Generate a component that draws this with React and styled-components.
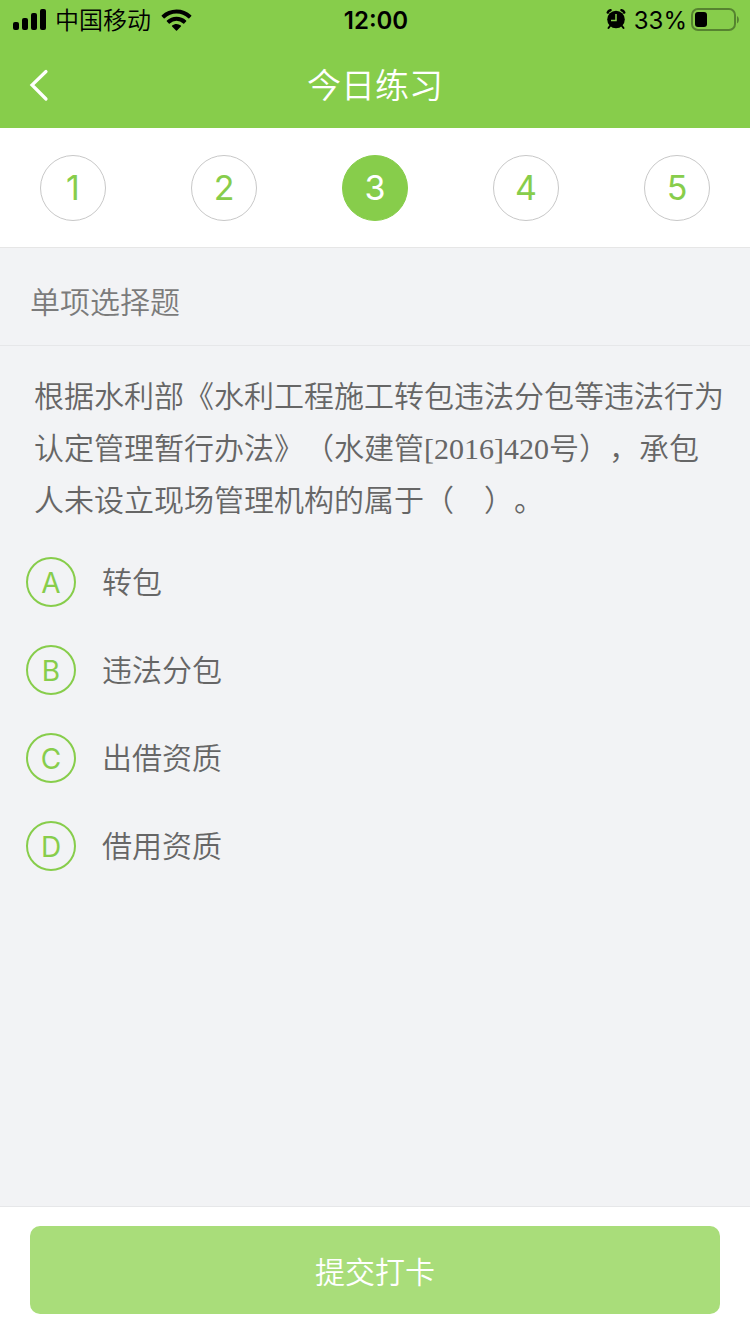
import React, { useState } from 'react';
import styled, { createGlobalStyle } from 'styled-components';

const GlobalStyle = createGlobalStyle`
    * {
        box-sizing: border-box;
    }
    body {
        margin: 0;
        background-color: #f2f3f5;
        color: #666;
        font-family: Inter, 'Noto Sans CJK SC', sans-serif;
        font-weight: 350;
    }
    button {
        font: inherit;
        border: none;
        padding: 0;
        cursor: pointer;
    }
`

const Page = styled.div`
    display: flex;
    flex-direction: column;
    min-height: 100vh;
`

const Top = styled.header`
    background-color: #87cd4b;
`

const StatusBar = styled.div`
    display: grid;
    grid-template-columns: 1fr auto 1fr;
    align-items: center;
    height: 42px;
    padding: 0 11px 0 13px;
    color: black;
    font-size: 24px;
    line-height: 42px;
`

const StatusGroup = styled.div`
    display: flex;
    align-items: center;
    justify-content: ${props => props.$end ? 'flex-end' : 'flex-start'};
    gap: ${props => props.$gap}px;
`

const Time = styled.time`
    font-weight: 600;
`

const Percent = styled.span`
    font-weight: 400;
`

const TitleBar = styled.div`
    display: grid;
    grid-template-columns: 80px 1fr 80px;
    align-items: center;
    height: 86px;
    h1 {
        margin: 0;
        color: white;
        font-size: 34px;
        font-weight: 350;
        line-height: 88px;
        text-align: center;
    }
`

const BackButton = styled.button`
    display: flex;
    align-items: center;
    height: 86px;
    padding-left: 28px;
    background: none;
`

const Steps = styled.nav`
    display: flex;
    justify-content: space-between;
    padding: 27px 40px 26px;
    background-color: white;
    border-bottom: 1px solid #e6e6e6;
`

const Step = styled.button`
    width: 66px;
    height: 66px;
    border-radius: 50%;
    font-size: 34px;
    line-height: 64px;
    color: ${props => props.$active ? 'white' : '#87cd4b'};
    background-color: ${props => props.$active ? '#87cd4b' : 'white'};

    && {
        border: 1px solid ${props => props.$active ? '#87cd4b' : '#c8c8c8'};
        font-weight: 400;
    }
`

const QuestionType = styled.h2`
    margin: 0;
    padding: 30px 30px 18px;
    border-bottom: 1px solid #e6e7e9;
    color: #7b7b7b;
    font-size: 30px;
    font-weight: 350;
    line-height: 49px;
`

const Question = styled.form`
    flex: 1;
    padding: 25px 26px;
`

const Options = styled.fieldset`
    display: flex;
    flex-direction: column;
    gap: 38px;
    min-width: 0;
    margin: 0;
    padding: 0;
    border: none;
`

const QuestionText = styled.legend`
    margin-bottom: 30px;
    padding: 0 0 0 8px;
    font-family: 'Liberation Serif', 'Noto Sans CJK SC', serif;
    font-size: 30px;
    line-height: 52px;
    text-spacing-trim: space-all;
`

const Option = styled.label`
    display: flex;
    align-items: center;
    gap: 26px;
    font-size: 30px;
    line-height: 50px;
    cursor: pointer;
`

const Radio = styled.input`
    position: absolute;
    opacity: 0;
    margin: 0;

    &:checked + span {
        color: white;
        background-color: #87cd4b;
    }
`

const Letter = styled.span`
    width: 50px;
    height: 50px;
    border: 2px solid #87cd4b;
    border-radius: 50%;
    color: #87cd4b;
    font-size: 28px;
    font-weight: 400;
    line-height: 48px;
    text-align: center;
`

const Footer = styled.footer`
    padding: 19px 30px 20px;
    background-color: white;
    border-top: 1px solid #e6e7e9;
`

const SubmitButton = styled.button`
    display: block;
    width: 100%;
    height: 88px;
    border-radius: 10px;
    color: white;
    background-color: #a9dd7a;

    && {
        font-size: 30px;
    }
`

const Signal = () => (
    <svg width="33" height="24" viewBox="0 0 33 24" aria-hidden="true">
        <rect x="0" y="13" width="6" height="8" rx="2" />
        <rect x="9" y="9" width="6" height="12" rx="2" />
        <rect x="18" y="4" width="6" height="17" rx="2" />
        <rect x="27" y="0" width="6" height="21" rx="2" />
    </svg>
)

const Wifi = () => (
    <svg width="32" height="24" viewBox="-1.500 -.5 32 24" aria-hidden="true">
        <path d="M15 0C9.300 0 4.100 2.200.3 5.800a.7.7 0 0 0 0 1l1.900 1.900a.7.7 0 0 0 1 0A17 17 0 0 1 15 4a17 17 0 0 1 11.800 4.700.7.7 0 0 0 1 0l1.900-1.900a.7.7 0 0 0 0-1A21.300 21.300 0 0 0 15 0Z" />
        <path d="M15 7.300c-3.700 0-7 1.400-9.600 3.700a.7.7 0 0 0 0 1l1.900 1.900a.7.7 0 0 0 1 0 10 10 0 0 1 13.400 0 .7.7 0 0 0 1 0l1.900-1.900a.7.7 0 0 0 0-1A14.300 14.300 0 0 0 15 7.300Z" />
        <path d="M15 14.500c-1.700 0-3.200.6-4.400 1.600a.7.7 0 0 0 0 1l3.900 4a.7.7 0 0 0 1 0l3.900-4a.7.7 0 0 0 0-1A6.900 6.900 0 0 0 15 14.500Z" />
    </svg>
)

const Alarm = () => (
    <svg width="24" height="24" viewBox="0 0 24 24" fill="none" aria-hidden="true">
        <circle cx="10" cy="10.500" r="8.800" fill="black" />
        <path d="M1.800 3.500Q2.500 1.500 4.500 1.200M18.200 3.500Q17.500 1.500 15.500 1.200" stroke="black" strokeWidth="2.500" strokeLinecap="round" />
        <path d="m4 17-1.500 2M16 17l1.500 2" stroke="black" strokeWidth="2" strokeLinecap="round" />
        <path d="M10 5V11.500H5" stroke="#87cd4b" strokeWidth="1.500" />
    </svg>
)

const Battery = () => (
    <svg width="48" height="26" viewBox="0 0 48 26" aria-hidden="true">
        <rect x="1" y="1" width="43" height="21" rx="6" fill="none" stroke="#568330" strokeWidth="2" />
        <rect x="4" y="4" width="12" height="15" rx="3" />
        <path d="M46 8c2.500 1.500 2.500 6 0 7.500Z" fill="#568330" />
    </svg>
)

const Back = () => (
    <svg width="22" height="34" viewBox="0 0 22 34" fill="none" aria-hidden="true">
        <path d="M18 2.500 4 16l14 14" stroke="white" strokeWidth="3.200" strokeLinecap="round" />
    </svg>
)

const steps = [1, 2, 3, 4, 5]

const question = '根据水利部《水利工程施工转包违法分包等违法行为认定管理暂行办法》（水建管[2016]420号），承包人未设立现场管理机构的属于（\u3000）。'

const options = [
    { letter: 'A', text: '转包' },
    { letter: 'B', text: '违法分包' },
    { letter: 'C', text: '出借资质' },
    { letter: 'D', text: '借用资质' },
]

const App = () => {
    const [current, setCurrent] = useState(3)

    return (
        <Page lang="zh-CN">
            <GlobalStyle />
            <Top>
                <StatusBar>
                    <StatusGroup $gap={9}>
                        <Signal />
                        <span>中国移动</span>
                        <Wifi />
                    </StatusGroup>
                    <Time>12:00</Time>
                    <StatusGroup $end $gap={4}>
                        <Alarm />
                        <Percent>33%</Percent>
                        <Battery />
                    </StatusGroup>
                </StatusBar>
                <TitleBar>
                    <BackButton type="button" aria-label="返回"><Back /></BackButton>
                    <h1>今日练习</h1>
                </TitleBar>
            </Top>

            <Steps>
                {steps.map((step) => (
                    <Step
                        key={step}
                        type="button"
                        $active={step === current}
                        onClick={() => setCurrent(step)}
                    >
                        {step}
                    </Step>
                ))}
            </Steps>

            <QuestionType>单项选择题</QuestionType>

            <Question id="question" onSubmit={(e) => e.preventDefault()}>
                <Options>
                    <QuestionText>{question}</QuestionText>
                    {options.map((option) => (
                        <Option key={option.letter}>
                            <Radio type="radio" name="answer" value={option.letter} />
                            <Letter>{option.letter}</Letter>
                            {option.text}
                        </Option>
                    ))}
                </Options>
            </Question>

            <Footer>
                <SubmitButton type="submit" form="question">提交打卡</SubmitButton>
            </Footer>
        </Page>
    )
}

export default App;
